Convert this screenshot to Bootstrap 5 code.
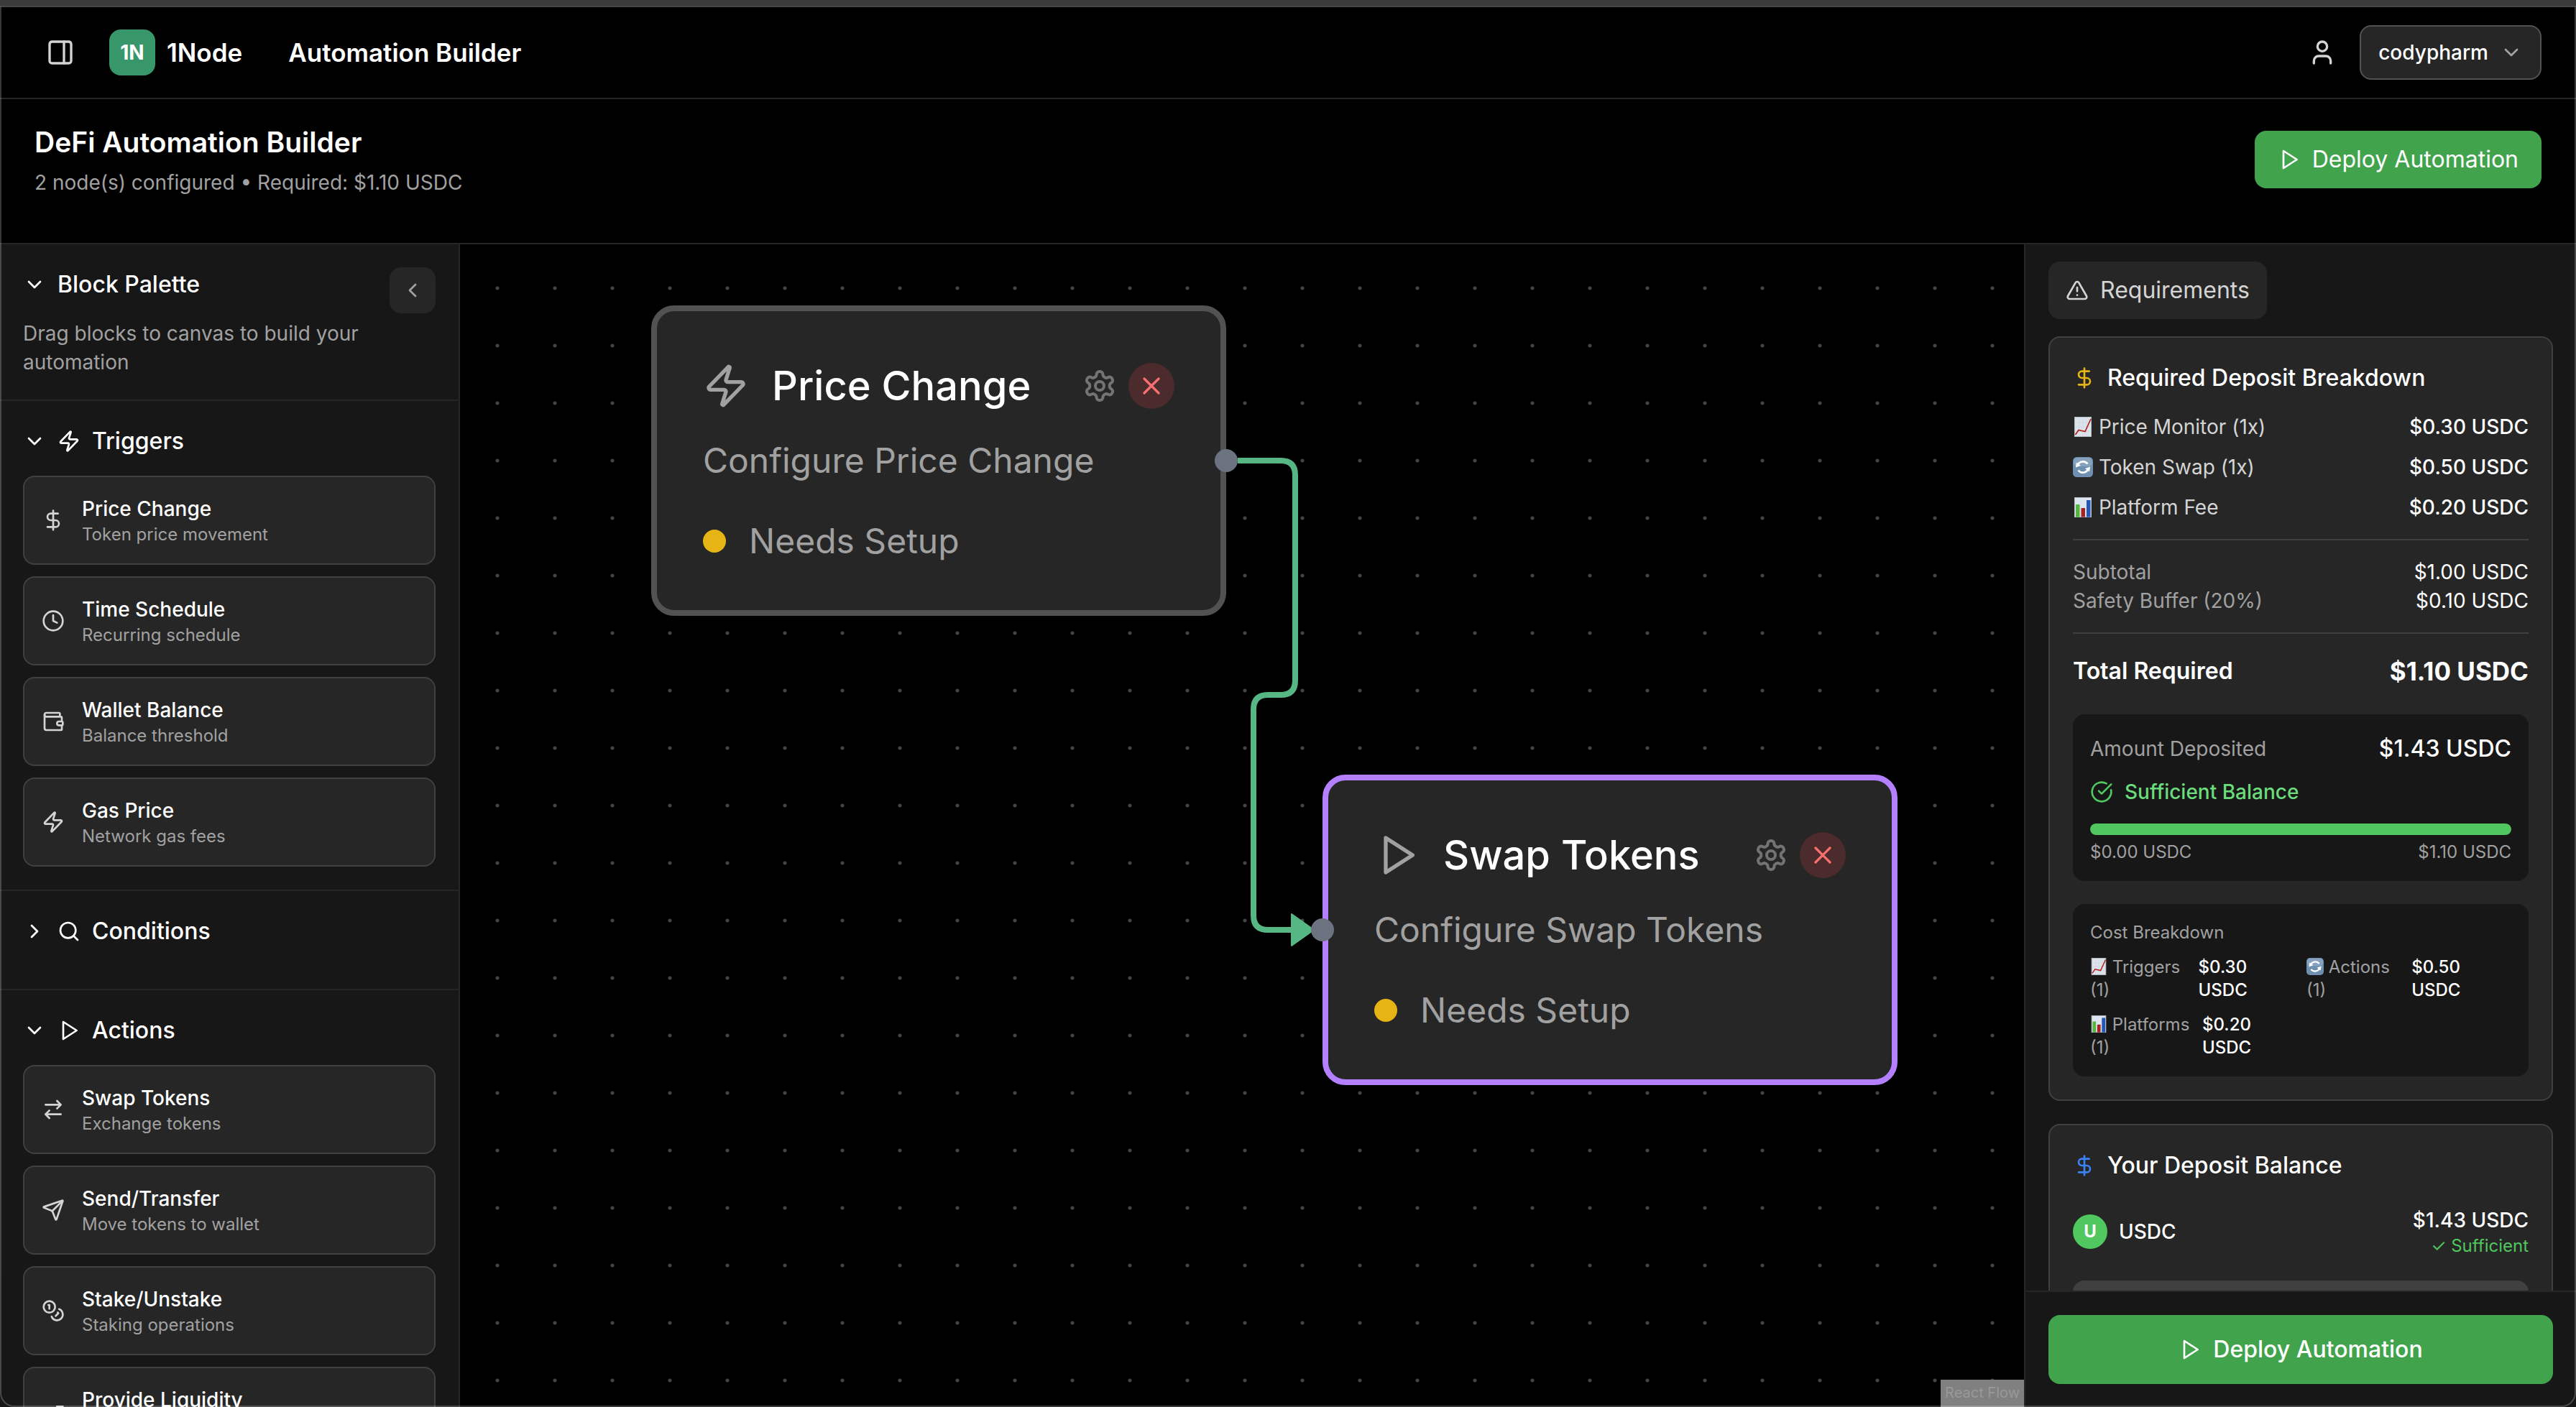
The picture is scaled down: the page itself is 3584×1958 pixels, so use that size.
<!DOCTYPE html>
<html lang="en" data-bs-theme="dark">
<head>
<meta charset="utf-8">
<meta name="viewport" content="width=device-width, initial-scale=1">
<title>1Node – Automation Builder</title>
<link href="https://cdn.jsdelivr.net/npm/bootstrap@5.3.0/dist/css/bootstrap.min.css" rel="stylesheet">
<style>
  /* 1rem = 32px, so the Bootstrap spacers become 8 / 16 / 32 / 48 / 96 */
  html { font-size: 32px; }
  body { font-family: Inter, "Liberation Sans", sans-serif; font-size: 28px; line-height: 40px; background: #000; color: #fff; }
  button { font: inherit; color: inherit; background: none; border: 0; padding: 0; }
  h1, h2, h3, p { margin: 0; }
  .ico { width: 32px; height: 32px; flex: none; fill: none; stroke: currentColor; stroke-width: 2; stroke-linecap: round; stroke-linejoin: round; }
  .ico-40 { width: 40px; height: 40px; }
  .ico-48 { width: 48px; height: 48px; }
  .ico-64 { width: 64px; height: 64px; }
  .emo { width: 1em; height: 1em; vertical-align: -0.14em; }

  .t-24 { font-size: 24px; line-height: 32px; }
  .t-32 { font-size: 32px; line-height: 48px; }
  .t-35 { font-size: 35px; line-height: 56px; }
  .t-39 { font-size: 39px; line-height: 56px; }
  .w-med { font-weight: 500; }
  .w-head { font-weight: 550; }
  .c-dim { color: #a1a1a1; }
  .c-soft { color: #d4d4d4; }
  .c-muted { color: #737373; }
  .c-gold { color: #e7b416; }
  .c-blue { color: #3b82f6; }
  .gap-24 { gap: 24px; }
  .pt-24 { padding-top: 24px; }

  .shell { position: relative; height: 100vh; }
  .frame-edge { position: absolute; inset: 8px 0 0 0; border: 2px solid rgba(255,255,255,.22); border-top-color: #464646; border-radius: 0 0 20px 20px; pointer-events: none; z-index: 9; }
  .titlestrip { height: 10px; background: #3b3b3b; flex: none; }
  .topbar { height: 128px; padding: 0 48px 0 64px; border-bottom: 2px solid #262626; flex: none; }
  .logo { width: 64px; height: 64px; border-radius: 16px; background: #38976a; font-weight: 700; }
  .userbtn { height: 76px; padding: 0 24px; background: #262626; border: 2px solid #525252; border-radius: 16px; }
  .subbar { padding: 32px 48px 64px; border-bottom: 2px solid #262626; flex: none; }
  .deploy { height: 80px; padding: 0 32px; border-radius: 16px; background: #41a44d; }
  .deploy-lg { height: 96px; }

  .pane { background: #171717; flex: none; overflow: hidden; }
  .pane-left { width: 640px; border-right: 2px solid #262626; }
  .pane-right { width: 768px; border-left: 2px solid #262626; }
  .sect { padding: 32px; border-bottom: 2px solid #262626; }
  .foldbtn { width: 64px; height: 64px; border-radius: 16px; background: #262626; }
  .block { display: flex; align-items: center; gap: 24px; padding: 24px; text-align: left; background: #262626; border: 2px solid #404040; border-radius: 16px; }

  .board { position: relative; overflow: hidden; background: #000 radial-gradient(circle, #454545 2px, transparent 3px) 12px 21px / 80px 80px; }
  .wires { position: absolute; left: 0; top: 0; width: 100%; height: 100%; }
  .flownode { position: absolute; width: 800px; padding: 64px; background: #262626; border: 8px solid #525252; border-radius: 32px; }
  .flownode.picked { border-color: #b580ff; }
  .flownode h3 { font-size: 56px; line-height: 80px; font-weight: 500; }
  .flownode .line { font-size: 48px; line-height: 64px; }
  .node-one { left: 266px; top: 85px; }
  .node-two { left: 1200px; top: 738px; }
  .port { position: absolute; top: 192px; width: 32px; height: 32px; border-radius: 50%; background: #6b7280; }
  .port-out { right: -24px; }
  .port-in { left: -24px; }
  .dot { width: 32px; height: 32px; border-radius: 50%; background: #e7b416; }
  .closebtn { width: 64px; height: 64px; border-radius: 50%; background: #4b2b2b; color: #f76f6f; }
  .credit { position: absolute; right: 0; bottom: 0; padding: 4px 6px 6px; background: #808080; color: #999; font-size: 20px; line-height: 28px; text-decoration: none; }

  .panel-body { padding: 24px 32px; min-height: 0; overflow: hidden; }
  .reqtab { height: 80px; padding: 0 24px; border-radius: 16px; background: #262626; color: #d4d4d4; font-size: 32px; }
  .panelcard { background: #262626; border: 2px solid #404040; border-radius: 16px; padding: 32px; flex: none; }
  .rule { height: 2px; margin: 24px 0; background: #404040; }
  .well { background: #171717; border-radius: 16px; padding: 24px; }
  .progress { height: 16px; margin: 24px 0 8px; border-radius: 8px; background: #404040; }
  .progress-bar { background: #50c75f; border-radius: 8px; }
  .costs { display: grid; grid-template-columns: 1fr 1fr; gap: 16px; }
  .coin { width: 48px; height: 48px; border-radius: 50%; background: #50c75f; font-weight: 700; }
  .ok { color: #6bdc7c; }
  .ok-2 { color: #50c75f; }
  .greybox { height: 96px; border-radius: 16px; background: #404040; }
  .footer-bar { padding: 32px; border-top: 2px solid #262626; background: #171717; flex: none; }
</style>
<script src="https://cdn.jsdelivr.net/npm/bootstrap@5.3.0/dist/js/bootstrap.bundle.min.js"></script>
</head>
<body>
<svg class="d-none" aria-hidden="true">
  <symbol id="panel" viewBox="0 0 24 24"><rect x="3" y="3" width="18" height="18" rx="2"/><path d="M15 3v18"/></symbol>
  <symbol id="down" viewBox="0 0 24 24"><path d="m6 9 6 6 6-6"/></symbol>
  <symbol id="right" viewBox="0 0 24 24"><path d="m9 18 6-6-6-6"/></symbol>
  <symbol id="left" viewBox="0 0 24 24"><path d="m15 18-6-6 6-6"/></symbol>
  <symbol id="user" viewBox="0 0 24 24"><path d="M19 21v-2a4 4 0 0 0-4-4H9a4 4 0 0 0-4 4v2"/><circle cx="12" cy="7" r="4"/></symbol>
  <symbol id="play" viewBox="0 0 24 24"><path d="M6 3 20 12 6 21Z"/></symbol>
  <symbol id="zap" viewBox="0 0 24 24"><path d="M4 14a1 1 0 0 1-.78-1.63l9.9-10.2a.5.5 0 0 1 .86.46l-1.92 6.02A1 1 0 0 0 13 10h7a1 1 0 0 1 .78 1.63l-9.9 10.2a.5.5 0 0 1-.86-.46l1.92-6.02A1 1 0 0 0 11 14z"/></symbol>
  <symbol id="dollar" viewBox="0 0 24 24"><path d="M12 2v20M17 5H9.5a3.5 3.5 0 0 0 0 7h5a3.5 3.5 0 0 1 0 7H6"/></symbol>
  <symbol id="clock" viewBox="0 0 24 24"><circle cx="12" cy="12" r="10"/><path d="M12 6v6l4 2"/></symbol>
  <symbol id="wallet" viewBox="0 0 24 24"><path d="M19 7V4a1 1 0 0 0-1-1H5a2 2 0 0 0 0 4h15a1 1 0 0 1 1 1v4h-3a2 2 0 0 0 0 4h3a1 1 0 0 0 1-1v-2a1 1 0 0 0-1-1"/><path d="M3 5v14a2 2 0 0 0 2 2h15a1 1 0 0 0 1-1v-4"/></symbol>
  <symbol id="search" viewBox="0 0 24 24"><circle cx="11" cy="11" r="8"/><path d="m21 21-4.3-4.3"/></symbol>
  <symbol id="swap" viewBox="0 0 24 24"><path d="m16 3 4 4-4 4M20 7H4M8 21l-4-4 4-4M4 17h16"/></symbol>
  <symbol id="send" viewBox="0 0 24 24"><path d="M14.536 21.686a.5.5 0 0 0 .937-.024l6.5-19a.496.496 0 0 0-.635-.635l-19 6.5a.5.5 0 0 0-.024.937l7.93 3.18a2 2 0 0 1 1.112 1.11z"/><path d="m21.854 2.147-10.94 10.939"/></symbol>
  <symbol id="coins" viewBox="0 0 24 24"><circle cx="8" cy="8" r="6"/><path d="M18.09 10.37A6 6 0 1 1 10.34 18M7 6h1v4M16.71 13.88l.7.71-2.82 2.82"/></symbol>
  <symbol id="trend" viewBox="0 0 24 24"><path d="M22 7l-8.5 8.5-5-5L2 17M16 7h6v6"/></symbol>
  <symbol id="alert" viewBox="0 0 24 24"><path d="m21.73 18-8-14a2 2 0 0 0-3.48 0l-8 14A2 2 0 0 0 4 21h16a2 2 0 0 0 1.73-3M12 9v4M12 17h.01"/></symbol>
  <symbol id="check" viewBox="0 0 24 24"><path d="M21.801 10A10 10 0 1 1 17 3.335"/><path d="m9 11 3 3L22 4"/></symbol>
  <symbol id="close" viewBox="0 0 24 24"><path d="M18 6 6 18M6 6l12 12"/></symbol>
  <symbol id="gear" viewBox="0 0 24 24"><path d="M12.22 2h-.44a2 2 0 0 0-2 2v.18a2 2 0 0 1-1 1.73l-.43.25a2 2 0 0 1-2 0l-.15-.08a2 2 0 0 0-2.73.73l-.22.38a2 2 0 0 0 .73 2.73l.15.1a2 2 0 0 1 1 1.72v.51a2 2 0 0 1-1 1.74l-.15.09a2 2 0 0 0-.73 2.73l.22.38a2 2 0 0 0 2.73.73l.15-.08a2 2 0 0 1 2 0l.43.25a2 2 0 0 1 1 1.73V20a2 2 0 0 0 2 2h.44a2 2 0 0 0 2-2v-.18a2 2 0 0 1 1-1.73l.43-.25a2 2 0 0 1 2 0l.15.08a2 2 0 0 0 2.73-.73l.22-.39a2 2 0 0 0-.73-2.73l-.15-.08a2 2 0 0 1-1-1.74v-.5a2 2 0 0 1 1-1.74l.15-.09a2 2 0 0 0 .73-2.73l-.22-.38a2 2 0 0 0-2.73-.73l-.15.08a2 2 0 0 1-2 0l-.43-.25a2 2 0 0 1-1-1.73V4a2 2 0 0 0-2-2z"/><circle cx="12" cy="12" r="3"/></symbol>
  <symbol id="e-line" viewBox="0 0 28 28"><rect x="2.5" y=".5" width="23" height="27" fill="#dde3ea" stroke="#b4bcc5"/><path d="M9 1v26M14 1v26M19 1v26M3 8h22M3 14h22M3 20h22" stroke="#cbd5e2" stroke-width=".7"/><path d="M3.500 25 8 18.500 17 20.500 25 3" fill="none" stroke="#b3221c" stroke-width="1.700"/></symbol>
  <symbol id="e-sync" viewBox="0 0 28 28"><rect width="28" height="28" rx="5.500" fill="#6f8fb0"/><rect x="1" y="1" width="26" height="12" rx="5" fill="#86a2be"/><path d="M6.500 12a8 8 0 0 1 14-2.500M21.500 16a8 8 0 0 1-14 2.500" fill="none" stroke="#fff" stroke-width="2.600"/><path d="M3.800 14.500 5 7.500l6 4.500zM24.200 13.500 23 20.500l-6-4.500z" fill="#fff"/></symbol>
  <symbol id="e-bar" viewBox="0 0 28 28"><rect x="2.500" y=".5" width="23" height="27" fill="#dde6f0" stroke="#b4bcc5"/><path d="M4 10h5.500v17.500H4z" fill="#55b53c"/><path d="M11.500 15H17v12.500h-5.500z" fill="#a8231d"/><path d="M19 4h5.500v23.500H19z" fill="#2458b8"/></symbol>
</svg>

<div class="shell d-flex flex-column overflow-hidden">
  <div class="frame-edge"></div>
  <div class="titlestrip"></div>

  <header class="topbar d-flex align-items-center">
    <button type="button" class="d-flex c-soft me-4" aria-label="Toggle sidebar"><svg class="ico ico-40"><use href="#panel"/></svg></button>
    <div class="logo d-flex align-items-center justify-content-center me-2">1N</div>
    <span class="t-35 me-auto d-flex fw-semibold"><span>1Node</span><span class="ms-3 ps-3">Automation Builder</span></span>
    <button type="button" class="d-flex c-soft me-3" aria-label="Account"><svg class="ico ico-40"><use href="#user"/></svg></button>
    <button type="button" class="userbtn d-flex align-items-center gap-2"><span class="w-med">codypharm</span><svg class="ico c-dim"><use href="#down"/></svg></button>
  </header>

  <section class="subbar d-flex align-items-center justify-content-between">
    <div>
      <h1 class="t-39 fw-semibold">DeFi Automation Builder</h1>
      <p class="c-dim mt-1">2 node(s) configured • Required: $1.10 USDC</p>
    </div>
    <button type="button" class="deploy t-32 d-flex align-items-center gap-2"><svg class="ico"><use href="#play"/></svg><span>Deploy Automation</span></button>
  </section>

  <div class="d-flex flex-grow-1 overflow-hidden">
    <aside class="pane pane-left">
      <div class="sect">
        <div class="d-flex justify-content-between align-items-start mb-1">
          <button type="button" class="d-flex align-items-center gap-2" aria-expanded="true"><svg class="ico"><use href="#down"/></svg><span class="t-32 w-head">Block Palette</span></button>
          <button type="button" class="foldbtn c-dim d-flex align-items-center justify-content-center" aria-label="Collapse palette"><svg class="ico"><use href="#left"/></svg></button>
        </div>
        <p class="c-dim">Drag blocks to canvas to build your automation</p>
      </div>
      <div class="sect d-flex flex-column gap-24">
        <button type="button" class="d-flex align-items-center gap-2" aria-expanded="true"><svg class="ico"><use href="#down"/></svg><svg class="ico"><use href="#zap"/></svg><span class="t-32 w-head">Triggers</span></button>
        <div class="d-flex flex-column gap-2">
          <button type="button" class="block"><svg class="ico c-soft"><use href="#dollar"/></svg><span><span class="d-block w-head">Price Change</span><span class="d-block t-24 c-dim">Token price movement</span></span></button>
          <button type="button" class="block"><svg class="ico c-soft"><use href="#clock"/></svg><span><span class="d-block w-head">Time Schedule</span><span class="d-block t-24 c-dim">Recurring schedule</span></span></button>
          <button type="button" class="block"><svg class="ico c-soft"><use href="#wallet"/></svg><span><span class="d-block w-head">Wallet Balance</span><span class="d-block t-24 c-dim">Balance threshold</span></span></button>
          <button type="button" class="block"><svg class="ico c-soft"><use href="#zap"/></svg><span><span class="d-block w-head">Gas Price</span><span class="d-block t-24 c-dim">Network gas fees</span></span></button>
        </div>
      </div>
      <div class="sect d-flex flex-column gap-24">
        <button type="button" class="d-flex align-items-center gap-2" aria-expanded="false"><svg class="ico"><use href="#right"/></svg><svg class="ico"><use href="#search"/></svg><span class="t-32 w-head">Conditions</span></button>
        <div></div>
      </div>
      <div class="sect d-flex flex-column gap-24">
        <button type="button" class="d-flex align-items-center gap-2" aria-expanded="true"><svg class="ico"><use href="#down"/></svg><svg class="ico"><use href="#play"/></svg><span class="t-32 w-head">Actions</span></button>
        <div class="d-flex flex-column gap-2">
          <button type="button" class="block"><svg class="ico c-soft"><use href="#swap"/></svg><span><span class="d-block w-head">Swap Tokens</span><span class="d-block t-24 c-dim">Exchange tokens</span></span></button>
          <button type="button" class="block"><svg class="ico c-soft"><use href="#send"/></svg><span><span class="d-block w-head">Send/Transfer</span><span class="d-block t-24 c-dim">Move tokens to wallet</span></span></button>
          <button type="button" class="block"><svg class="ico c-soft"><use href="#coins"/></svg><span><span class="d-block w-head">Stake/Unstake</span><span class="d-block t-24 c-dim">Staking operations</span></span></button>
          <button type="button" class="block"><svg class="ico c-soft"><use href="#trend"/></svg><span><span class="d-block w-head">Provide Liquidity</span><span class="d-block t-24">&nbsp;</span></span></button>
        </div>
      </div>
    </aside>

    <main class="board flex-grow-1">
      <svg class="wires" fill="none">
        <path d="M1082 301H1142Q1162 301 1162 321V607Q1162 627 1142 627H1124Q1104 627 1104 647V934Q1104 954 1124 954H1158" stroke="#56b785" stroke-width="8"/>
        <path d="M1157 932v44l31-22z" fill="#56b785" stroke="#56b785" stroke-width="2" stroke-linejoin="round"/>
      </svg>
      <article class="flownode node-one">
        <div class="d-flex align-items-center justify-content-between">
          <div class="d-flex align-items-center gap-3"><svg class="ico ico-64 c-dim"><use href="#zap"/></svg><h3>Price Change</h3></div>
          <div class="d-flex align-items-center gap-2">
            <button type="button" class="d-flex c-muted" aria-label="Configure"><svg class="ico ico-48"><use href="#gear"/></svg></button>
            <button type="button" class="closebtn d-flex align-items-center justify-content-center" aria-label="Remove"><svg class="ico ico-40"><use href="#close"/></svg></button>
          </div>
        </div>
        <p class="line c-dim mt-3 mb-4">Configure Price Change</p>
        <p class="line c-dim d-flex align-items-center gap-3"><span class="dot"></span>Needs Setup</p>
        <span class="port port-out"></span>
      </article>
      <article class="flownode picked node-two">
        <div class="d-flex align-items-center justify-content-between">
          <div class="d-flex align-items-center gap-3"><svg class="ico ico-64 c-dim"><use href="#play"/></svg><h3>Swap Tokens</h3></div>
          <div class="d-flex align-items-center gap-2">
            <button type="button" class="d-flex c-muted" aria-label="Configure"><svg class="ico ico-48"><use href="#gear"/></svg></button>
            <button type="button" class="closebtn d-flex align-items-center justify-content-center" aria-label="Remove"><svg class="ico ico-40"><use href="#close"/></svg></button>
          </div>
        </div>
        <p class="line c-dim mt-3 mb-4">Configure Swap Tokens</p>
        <p class="line c-dim d-flex align-items-center gap-3"><span class="dot"></span>Needs Setup</p>
        <span class="port port-in"></span>
      </article>
      <a class="credit" href="#">React Flow</a>
    </main>

    <aside class="pane pane-right d-flex flex-column">
      <div class="panel-body flex-grow-1 d-flex flex-column">
        <button type="button" class="reqtab d-flex align-items-center gap-2 align-self-start flex-shrink-0"><svg class="ico"><use href="#alert"/></svg>Requirements</button>
        <div class="d-flex flex-column gap-3 pt-24">
          <section class="panelcard">
            <h2 class="t-32 w-head d-flex align-items-center gap-2"><svg class="ico c-gold"><use href="#dollar"/></svg>Required Deposit Breakdown</h2>
            <div class="d-flex flex-column gap-2 pt-24">
              <div class="d-flex justify-content-between"><span class="c-soft"><svg class="emo"><use href="#e-line"/></svg> Price Monitor (1x)</span><span class="w-med">$0.30 USDC</span></div>
              <div class="d-flex justify-content-between"><span class="c-soft"><svg class="emo"><use href="#e-sync"/></svg> Token Swap (1x)</span><span class="w-med">$0.50 USDC</span></div>
              <div class="d-flex justify-content-between"><span class="c-soft"><svg class="emo"><use href="#e-bar"/></svg> Platform Fee</span><span class="w-med">$0.20 USDC</span></div>
            </div>
            <div class="rule"></div>
            <div class="d-flex justify-content-between"><span class="c-dim">Subtotal</span><span>$1.00 USDC</span></div>
            <div class="d-flex justify-content-between"><span class="c-dim">Safety Buffer (20%)</span><span>$0.10 USDC</span></div>
            <div class="rule"></div>
            <div class="d-flex justify-content-between align-items-center"><span class="t-32 fw-semibold">Total Required</span><span class="t-35 fw-bold">$1.10 USDC</span></div>
            <div class="well mt-3">
              <div class="d-flex justify-content-between align-items-center"><span class="c-dim">Amount Deposited</span><span class="t-32 w-med">$1.43 USDC</span></div>
              <div class="d-flex align-items-center gap-2 mt-2 ok w-med"><svg class="ico ok-2"><use href="#check"/></svg>Sufficient Balance</div>
              <div class="progress" role="progressbar" aria-label="Deposit" aria-valuenow="100" aria-valuemin="0" aria-valuemax="100"><div class="progress-bar" style="width:100%"></div></div>
              <div class="d-flex justify-content-between t-24 c-dim"><span>$0.00 USDC</span><span>$1.10 USDC</span></div>
            </div>
            <div class="well mt-3 t-24">
              <div class="c-dim mb-2">Cost Breakdown</div>
              <div class="costs">
                <div class="d-flex justify-content-between"><span class="c-dim"><svg class="emo"><use href="#e-line"/></svg> Triggers (1)</span><span class="w-med">$0.30 USDC</span></div>
                <div class="d-flex justify-content-between"><span class="c-dim"><svg class="emo"><use href="#e-sync"/></svg> Actions (1)</span><span class="w-med">$0.50 USDC</span></div>
                <div class="d-flex justify-content-between"><span class="c-dim"><svg class="emo"><use href="#e-bar"/></svg> Platforms (1)</span><span class="w-med">$0.20 USDC</span></div>
              </div>
            </div>
          </section>
          <section class="panelcard">
            <h2 class="t-32 w-head d-flex align-items-center gap-2 mb-3"><svg class="ico c-blue"><use href="#dollar"/></svg>Your Deposit Balance</h2>
            <div class="d-flex justify-content-between align-items-center mb-3">
              <div class="d-flex align-items-center gap-2"><span class="coin t-24 d-flex align-items-center justify-content-center">U</span><span class="w-med">USDC</span></div>
              <div class="text-end"><div class="w-med">$1.43 USDC</div><div class="t-24 ok-2">✓ Sufficient</div></div>
            </div>
            <div class="greybox"></div>
          </section>
        </div>
      </div>
      <div class="footer-bar"><button type="button" class="deploy deploy-lg t-32 w-med w-100 d-flex align-items-center justify-content-center gap-2"><svg class="ico"><use href="#play"/></svg><span>Deploy Automation</span></button></div>
    </aside>
  </div>
</div>
</body>
</html>
